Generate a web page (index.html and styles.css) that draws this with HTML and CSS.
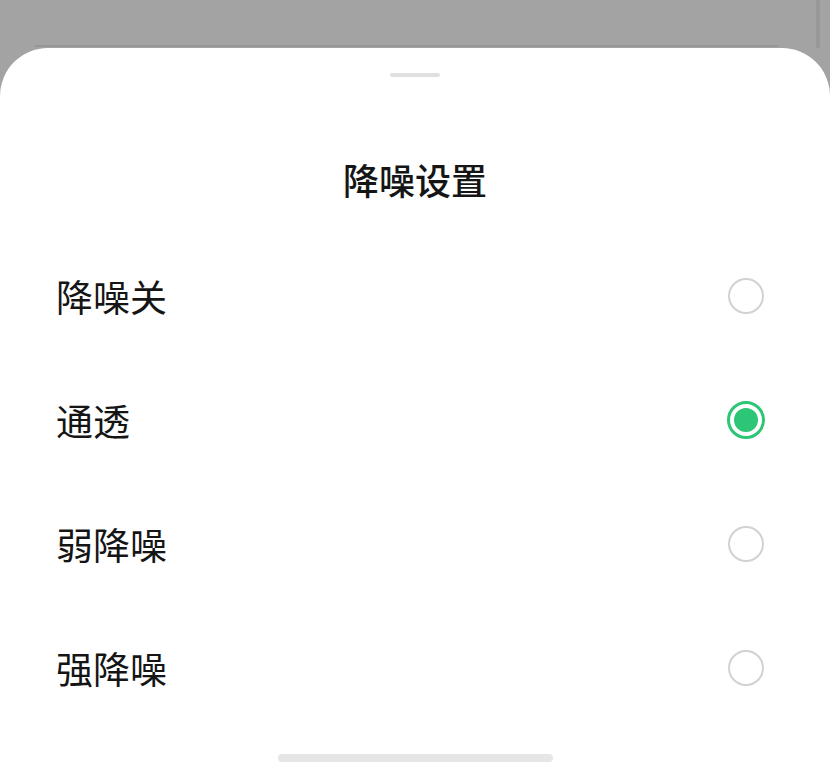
FILE: index.html
```html
<!doctype html>
<html>
<head>
<meta charset="utf-8">
<link rel="stylesheet" href="styles.css">
<title>降噪设置</title>
</head>
<body>
<div class="backdrop">
	<div class="backdrop-inner">
		<div class="backdrop-line"></div>
	</div>
</div>
<div class="sheet">
	<div class="handle"></div>
	<h1 class="title">降噪设置</h1>
	<div class="options">
		<div class="option">
			<span class="label">降噪关</span>
			<span class="radio"></span>
		</div>
		<div class="option">
			<span class="label">通透</span>
			<span class="radio checked"></span>
		</div>
		<div class="option">
			<span class="label">弱降噪</span>
			<span class="radio"></span>
		</div>
		<div class="option">
			<span class="label">强降噪</span>
			<span class="radio"></span>
		</div>
	</div>
	<div class="home-bar"></div>
</div>
</body>
</html>
```

FILE: styles.css
```css
html, body {
	margin: 0;
	padding: 0;
}
body {
	width: 830px;
	height: 762px;
	overflow: hidden;
	background-color: #a3a3a3;
	font-family: "Noto Sans CJK SC", "Noto Sans", sans-serif;
	color: #151515;
}

.backdrop {
	height: 48px;
	display: flex;
}
.backdrop-inner {
	flex: 1;
	margin-right: 10px;
	border-right: 4px solid #989898;
	display: flex;
	align-items: flex-end;
}
.backdrop-line {
	flex: 1;
	height: 2px;
	margin: 0 38px 1px 35px;
	background-color: #969696;
}

.sheet {
	height: 714px;
	background-color: #ffffff;
	border-radius: 48px 48px 0 0;
	display: flex;
	flex-direction: column;
	align-items: center;
	overflow: hidden;
}

.handle {
	width: 50px;
	height: 5px;
	margin-top: 25px;
	border-radius: 3px;
	background-color: #e0e0e0;
}

.title {
	margin: 78px 0 0;
	font-size: 36px;
	line-height: 48px;
	font-weight: 500;
	text-align: center;
}

.options {
	align-self: stretch;
	margin-top: 31px;
}
.option {
	height: 124px;
	display: flex;
	align-items: center;
	justify-content: space-between;
	padding: 0 66px 0 56px;
}
.label {
	font-size: 37px;
	line-height: 48px;
}

.radio {
	width: 36px;
	height: 36px;
	box-sizing: border-box;
	border-radius: 50%;
	border: 2.5px solid #d2d2d2;
	display: flex;
	align-items: center;
	justify-content: center;
}
.radio.checked {
	width: 38px;
	height: 38px;
	margin-right: -1px;
	border: 3px solid #2dc677;
}
.radio.checked::after {
	content: "";
	width: 24px;
	height: 24px;
	border-radius: 50%;
	background-color: #2dc677;
}

.home-bar {
	width: 275px;
	height: 10px;
	margin-top: 24px;
	border-radius: 5px;
	background-color: #e6e6e6;
}
```
